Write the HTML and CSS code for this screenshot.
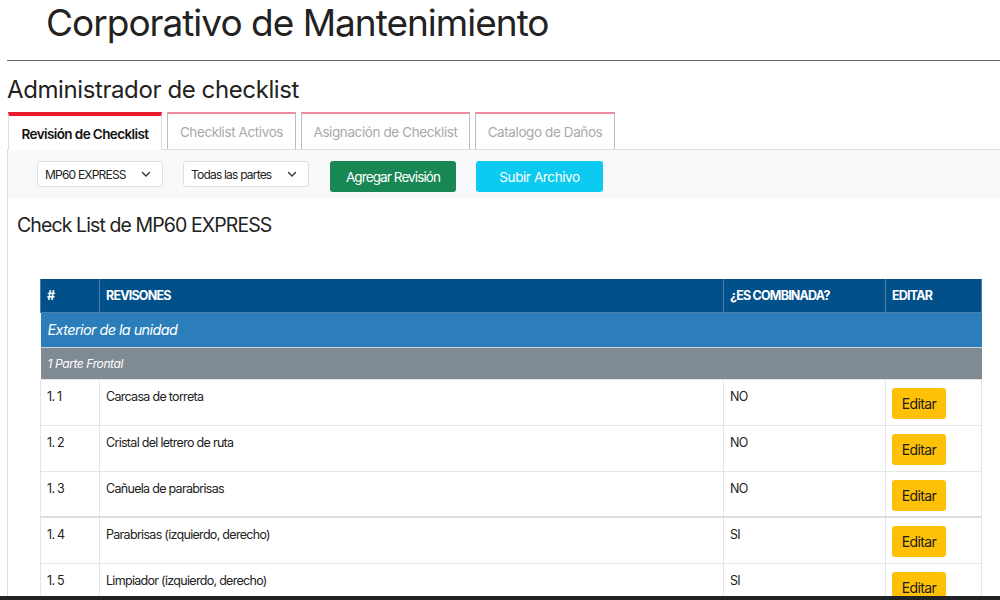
FILE: index.html
```html
<!DOCTYPE html>
<html lang="es">
<head>
<meta charset="utf-8">
<title>Corporativo de Mantenimiento</title>
<link rel="stylesheet" href="styles.css">
</head>
<body>
<header class="top">
  <h1 class="brand">Corporativo de Mantenimiento</h1>
</header>
<h2 class="page-title">Administrador de checklist</h2>
<nav class="tabs">
  <a class="tab active">Revisión de Checklist</a>
  <a class="tab">Checklist Activos</a>
  <a class="tab">Asignación de Checklist</a>
  <a class="tab">Catalogo de Daños</a>
</nav>
<section class="panel">
  <div class="toolbar">
    <div class="select">
      <span>MP60 EXPRESS</span>
      <svg viewBox="0 0 12 12" class="chev"><path d="M2.5 4.5 6 8l3.5-3.5" fill="none" stroke="#333" stroke-width="1.4" stroke-linecap="round" stroke-linejoin="round"/></svg>
    </div>
    <div class="select">
      <span>Todas las partes</span>
      <svg viewBox="0 0 12 12" class="chev"><path d="M2.5 4.5 6 8l3.5-3.5" fill="none" stroke="#333" stroke-width="1.4" stroke-linecap="round" stroke-linejoin="round"/></svg>
    </div>
    <button class="btn btn-green">Agregar Revisión</button>
    <button class="btn btn-cyan">Subir Archivo</button>
  </div>
  <h3 class="list-title">Check List de MP60 EXPRESS</h3>
  <table class="grid">
    <thead>
      <tr>
        <th class="c-num">#</th>
        <th class="c-rev">REVISONES</th>
        <th class="c-comb">¿ES COMBINADA?</th>
        <th class="c-edit">EDITAR</th>
      </tr>
    </thead>
    <tbody>
      <tr class="group"><td colspan="4">Exterior de la unidad</td></tr>
      <tr class="sub"><td colspan="4">1 Parte Frontal</td></tr>
      <tr><td>1. 1</td><td>Carcasa de torreta</td><td>NO</td><td><button class="btn-edit">Editar</button></td></tr>
      <tr><td>1. 2</td><td>Cristal del letrero de ruta</td><td>NO</td><td><button class="btn-edit">Editar</button></td></tr>
      <tr class="sep"><td>1. 3</td><td>Cañuela de parabrisas</td><td>NO</td><td><button class="btn-edit">Editar</button></td></tr>
      <tr><td>1. 4</td><td>Parabrisas (izquierdo, derecho)</td><td>SI</td><td><button class="btn-edit">Editar</button></td></tr>
      <tr><td>1. 5</td><td>Limpiador (izquierdo, derecho)</td><td>SI</td><td><button class="btn-edit">Editar</button></td></tr>
    </tbody>
  </table>
</section>
<div class="bottom-bar"></div>
</body>
</html>
```
FILE: styles.css
```css
* { box-sizing: border-box; }
html, body { margin: 0; padding: 0; background: #fff; }
body {
  font-family: Inter, "Noto Sans", "Liberation Sans", sans-serif;
  color: #212529;
  overflow: hidden;
  height: 600px;
}
.top {
  margin-left: 7px;
  border-bottom: 1px solid #6b6b6b;
  height: 61px;
}
.brand {
  margin: 0;
  padding: 0 0 0 39px;
  font-size: 37px;
  font-weight: 400;
  line-height: 46px;
  letter-spacing: -1px;
  color: #222;
}
.page-title {
  margin: 14px 0 0 7px;
  font-size: 24px;
  font-weight: 400;
  line-height: 30px;
  letter-spacing: -0.4px;
  color: #222;
}
.tabs {
  display: flex;
  gap: 5px;
  margin: 7px 0 0 8px;
  height: 37px;
  position: relative;
  z-index: 1;
}
.tab {
  display: flex;
  align-items: center;
  justify-content: center;
  white-space: nowrap;
  padding: 0;
  height: 37px;
  font-size: 13.5px;
  color: #a9a9a9;
  border: 1px solid #bdbdbd;
  border-top: 2px solid #f08aa0;
  border-bottom: none;
  background: #fff;
  letter-spacing: -0.4px;
}
.tab:nth-child(1) { width: 154px; }
.tab:nth-child(2) { width: 129px; }
.tab:nth-child(3) { width: 169px; }
.tab:nth-child(4) { width: 140px; }
.tab.active {
  color: #111;
  font-weight: 600;
  border-top: 4px solid #e8192c;
  border-left-color: #ddd;
  border-right-color: #ddd;
  height: 38px;
  padding-top: 1px;
  letter-spacing: -0.6px;
}
.panel {
  margin-left: 7px;
  border-left: 1px solid #ddd;
  border-top: 1px solid #ddd;
  height: 460px;
}
.toolbar {
  display: flex;
  align-items: center;
  height: 49px;
  background: #f8f9fa;
  padding-left: 29px;
}
.select {
  display: flex;
  align-items: center;
  justify-content: space-between;
  width: 126px;
  height: 26px;
  background: #fff;
  border: 1px solid #dcdfe3;
  border-radius: 3px;
  padding: 0 10px 0 7px;
  font-size: 12px;
  color: #222;
  letter-spacing: -0.8px;
  margin-right: 20px;
  margin-top: -1px;
}
.select + .select { margin-right: 21px; }
.chev { width: 12px; height: 12px; }
.btn {
  font-family: inherit;
  border: none;
  border-radius: 3px;
  height: 31px;
  width: 126px;
  color: #fff;
  font-size: 13.5px;
  letter-spacing: -0.6px;
  margin-top: 4px;
  padding: 0;
}
.btn-green { background: #198754; margin-right: 20px; letter-spacing: -0.9px; }
.btn-cyan { background: #0dcaf0; width: 127px; letter-spacing: -0.4px; }
.list-title {
  margin: 13px 0 0 9px;
  font-size: 19.5px;
  font-weight: 400;
  line-height: 26px;
  letter-spacing: -0.9px;
  color: #222;
}
.grid {
  margin: 41px 0 0 32px;
  width: 941px;
  border-collapse: collapse;
  font-size: 12.5px;
  table-layout: fixed;
}
.grid th {
  background: #02508a;
  color: #fff;
  text-align: left;
  font-weight: 700;
  font-size: 12.5px;
  letter-spacing: -0.8px;
  height: 33px;
  padding: 0 6px;
  border: 1px solid #4d7fa8;
  border-top: none;
}
.c-num { width: 59px; }
.c-rev { width: 624px; }
.c-comb { width: 162px; }
.c-edit { width: 96px; }
.grid td {
  padding: 9px 6px 0;
  vertical-align: top;
  height: 46px;
  border: 1px solid #e4e6ea;
  color: #222;
  letter-spacing: -0.7px;
}
.grid tr.group td {
  background: #2b7eb9;
  color: #fff;
  font-style: italic;
  font-size: 14.5px;
  height: 35px;
  padding: 0 7px;
  vertical-align: middle;
  border: none;
  border-top: 1px solid #a9c7e0;
  letter-spacing: -0.6px;
}
.grid tr.sub td {
  background: #808a93;
  color: #fff;
  font-style: italic;
  font-size: 12px;
  height: 32px;
  padding: 0 7px;
  vertical-align: middle;
  border: none;
  border-top: 1px solid #c8d4de;
  letter-spacing: -0.4px;
}
.grid tr.sep td { border-bottom: 2px solid #dadde1; }
.grid td:last-child { padding-left: 6px; }
.btn-edit {
  font-family: inherit;
  background: #ffc107;
  border: none;
  border-radius: 3px;
  width: 54px;
  height: 31px;
  font-size: 14px;
  color: #1a1a1a;
  letter-spacing: -0.6px;
  padding: 0;
  margin-top: -1px;
}
.bottom-bar {
  position: fixed;
  left: 0;
  right: 0;
  bottom: 0;
  height: 4px;
  background: #1f2326;
}
```
